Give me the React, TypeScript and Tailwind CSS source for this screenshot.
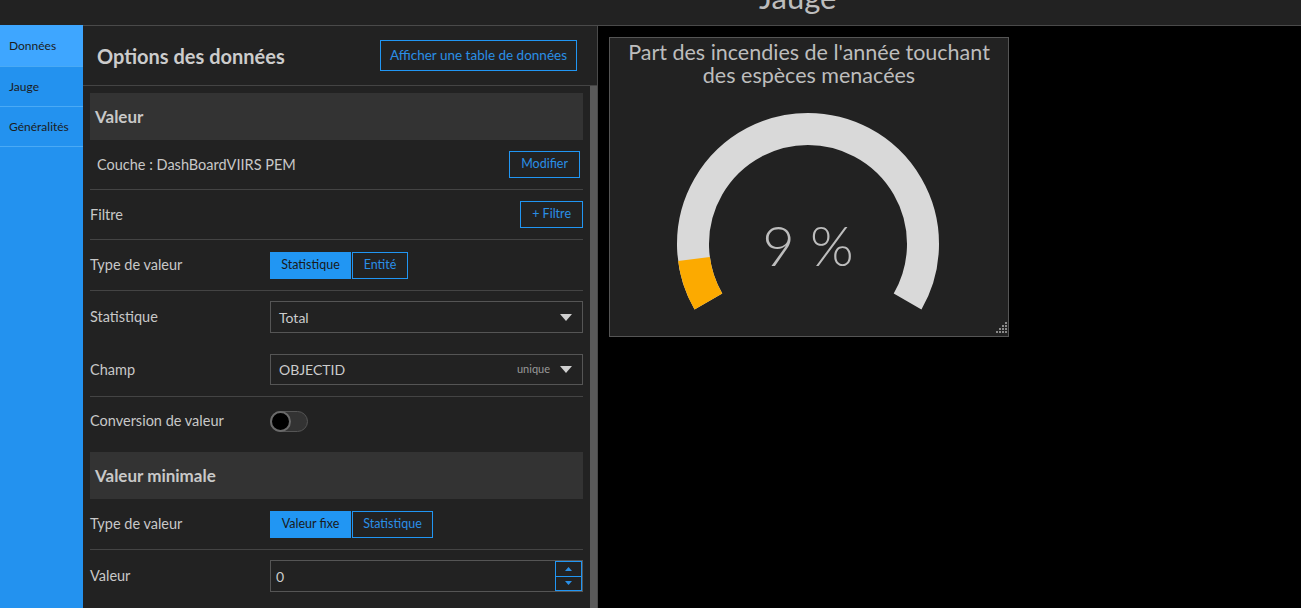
import React from "react";

const FONT = { fontFamily: "Lato, 'Open Sans', 'Noto Sans', sans-serif" };

function Caret() {
  return (
    <svg width="12" height="7" viewBox="0 0 12 7" className="shrink-0">
      <path d="M0 0 L12 0 L6 7 Z" fill="#cfcfcf" />
    </svg>
  );
}

function Row({
  label,
  children,
  h,
  border = true,
}: {
  label: string;
  children?: React.ReactNode;
  h: string;
  border?: boolean;
}) {
  return (
    <div
      className={`flex items-center ${h} ${border ? "border-b border-[#444444]" : ""}`}
    >
      <div className="w-[180px] shrink-0 text-[14.5px] text-[#c8c8c8]">{label}</div>
      <div className="flex flex-1 items-center">{children}</div>
    </div>
  );
}

function Seg({ a, b, bw }: { a: string; b: string; bw: string }) {
  return (
    <div className="flex h-[27px] gap-px">
      <div className="flex w-[81px] items-center justify-center bg-[#2196f3] text-[12.5px] text-[#1a1a1a]">
        {a}
      </div>
      <div
        className={`flex ${bw} items-center justify-center border border-[#2196f3] text-[12.5px] text-[#2a8fe6]`}
      >
        {b}
      </div>
    </div>
  );
}

function SectionHeader({ title }: { title: string }) {
  return (
    <div className="mt-[7px] flex h-[47px] items-center bg-[#333333] px-[5px] text-[17px] font-bold text-[#c8c8c8]">
      {title}
    </div>
  );
}

export default function App() {
  const cx = 198;
  const cy = 206;
  const r = 115;
  const pt = (deg: number) => {
    const t = (deg * Math.PI) / 180;
    return [cx + r * Math.cos(t), cy - r * Math.sin(t)];
  };
  const [sx, sy] = pt(210);
  const [ex, ey] = pt(-30);
  const [ox, oy] = pt(187.5);

  const grip: [number, number][] = [];
  for (let k = 0; k < 4; k++) {
    for (let c = 3 - k; c <= 3; c++) {
      grip.push([386 + c * 3, 284 + k * 3]);
    }
  }

  return (
    <div
      className="flex h-[608px] w-[1301px] flex-col overflow-hidden bg-black"
      style={FONT}
    >
      {/* top bar */}
      <div className="h-[25px] shrink-0 overflow-hidden bg-[#222222]">
        <div className="ml-[759px] -mt-[18px] text-[31px] leading-none text-[#bdbdbd]">
          Jauge
        </div>
      </div>

      <div className="flex flex-1">
        {/* sidebar */}
        <div className="w-[83px] shrink-0 bg-[#2392ef]">
          <div className="flex h-[42px] items-center border-b border-[#4aaaf5] bg-[#3ea6ff] pl-[9px] text-[12px] text-[#1c1c1c]">
            Données
          </div>
          <div className="flex h-[40px] items-center border-b border-[#4aaaf5] pl-[9px] text-[12px] text-[#1c1c1c]">
            Jauge
          </div>
          <div className="flex h-[40px] items-center border-b border-[#4aaaf5] pl-[9px] text-[12px] text-[#1c1c1c]">
            Généralités
          </div>
        </div>

        {/* panel */}
        <div className="flex w-[515px] shrink-0 flex-col border-t border-r border-[#4a4a4a] bg-[#222222]">
          <div className="flex h-[60px] shrink-0 items-center justify-between border-b border-[#444444] pl-[14px] pr-[20px]">
            <div className="text-[20px] font-bold text-[#cccccc]">Options des données</div>
            <div className="flex h-[31px] items-center border border-[#2196f3] px-[9px] text-[13.5px] text-[#2a8fe6]">
              Afficher une table de données
            </div>
          </div>
          <div className="flex flex-1">
            <div className="flex-1 px-[7px]">
              <SectionHeader title="Valeur" />
              <div className="flex h-[50px] items-center justify-between border-b border-[#444444] pl-[7px] pr-[3px]">
                <div className="text-[14.5px] text-[#c8c8c8]">Couche : DashBoardVIIRS PEM</div>
                <div className="flex h-[27px] items-center border border-[#2196f3] px-[11px] text-[12.5px] text-[#2a8fe6]">
                  Modifier
                </div>
              </div>
              <div className="flex h-[50px] items-center justify-between border-b border-[#444444]">
                <div className="text-[14.5px] text-[#c8c8c8]">Filtre</div>
                <div className="flex h-[27px] items-center border border-[#2196f3] px-[11px] text-[12.5px] text-[#2a8fe6]">
                  + Filtre
                </div>
              </div>
              <Row label="Type de valeur" h="h-[51px]">
                <Seg a="Statistique" b="Entité" bw="w-[56px]" />
              </Row>
              <Row label="Statistique" h="h-[52px]" border={false}>
                <div className="flex h-[32px] flex-1 items-center justify-between border border-[#555555] pl-[8px] pr-[10px] text-[14px] text-[#cccccc]">
                  <span>Total</span>
                  <Caret />
                </div>
              </Row>
              <Row label="Champ" h="h-[54px]">
                <div className="flex h-[31px] flex-1 items-center justify-between border border-[#555555] pl-[8px] pr-[10px] text-[14px] text-[#cccccc]">
                  <span>OBJECTID</span>
                  <div className="flex items-center gap-[10px]">
                    <span className="text-[11px] text-[#999999]">unique</span>
                    <Caret />
                  </div>
                </div>
              </Row>
              <Row label="Conversion de valeur" h="h-[48px]" border={false}>
                <div className="flex h-[21px] w-[38px] items-center rounded-full border border-[#555555] bg-[#333333]">
                  <div className="h-[21px] w-[21px] -ml-px rounded-full border-2 border-[#6a6a6a] bg-black" />
                </div>
              </Row>
              <SectionHeader title="Valeur minimale" />
              <Row label="Type de valeur" h="h-[51px]">
                <Seg a="Valeur fixe" b="Statistique" bw="w-[81px]" />
              </Row>
              <Row label="Valeur" h="h-[52px]" border={false}>
                <div className="flex h-[32px] flex-1 items-stretch border border-[#555555] text-[14px] text-[#cccccc]">
                  <div className="flex flex-1 items-center pl-[5px]">0</div>
                  <div className="flex w-[27px] flex-col">
                    <div className="flex flex-1 items-center justify-center border border-[#2196f3]">
                      <svg width="7" height="4" viewBox="0 0 7 4">
                        <path d="M0 4 L7 4 L3.5 0 Z" fill="#2a8fe6" />
                      </svg>
                    </div>
                    <div className="flex flex-1 items-center justify-center border border-t-0 border-[#2196f3]">
                      <svg width="7" height="4" viewBox="0 0 7 4">
                        <path d="M0 0 L7 0 L3.5 4 Z" fill="#2a8fe6" />
                      </svg>
                    </div>
                  </div>
                </div>
              </Row>
            </div>
            <div className="w-[7px] shrink-0 bg-[#5a5a5a]" />
          </div>
        </div>

        {/* canvas */}
        <div className="flex-1 border-t border-[#4a4a4a] bg-black pl-[11px] pt-[11px]">
          <div className="relative h-[300px] w-[400px] border border-[#555555] bg-[#222222]">
            <div className="pt-[3px] text-center text-[21.5px] leading-[23px] text-[#bdbdbd]">
              Part des incendies de l'année touchant
              <br />
              des espèces menacées
            </div>
            <svg
              className="absolute left-0 top-0"
              width="398"
              height="298"
              viewBox="0 0 398 298"
            >
              <path
                d={`M ${sx} ${sy} A ${r} ${r} 0 1 1 ${ex} ${ey}`}
                fill="none"
                stroke="#d9d9d9"
                strokeWidth="32"
              />
              <path
                d={`M ${sx} ${sy} A ${r} ${r} 0 0 1 ${ox} ${oy}`}
                fill="none"
                stroke="#fcaa00"
                strokeWidth="32"
              />
              <text
                x={cx}
                y={228}
                textAnchor="middle"
                fontSize="56"
                fontWeight="300"
                fill="#bdbdbd"
                style={FONT}
              >
                9 %
              </text>
              {grip.map(([x, y], i) => (
                <rect key={i} x={x} y={y} width="2" height="2" fill="#8a8a8a" />
              ))}
            </svg>
          </div>
        </div>
      </div>
    </div>
  );
}
